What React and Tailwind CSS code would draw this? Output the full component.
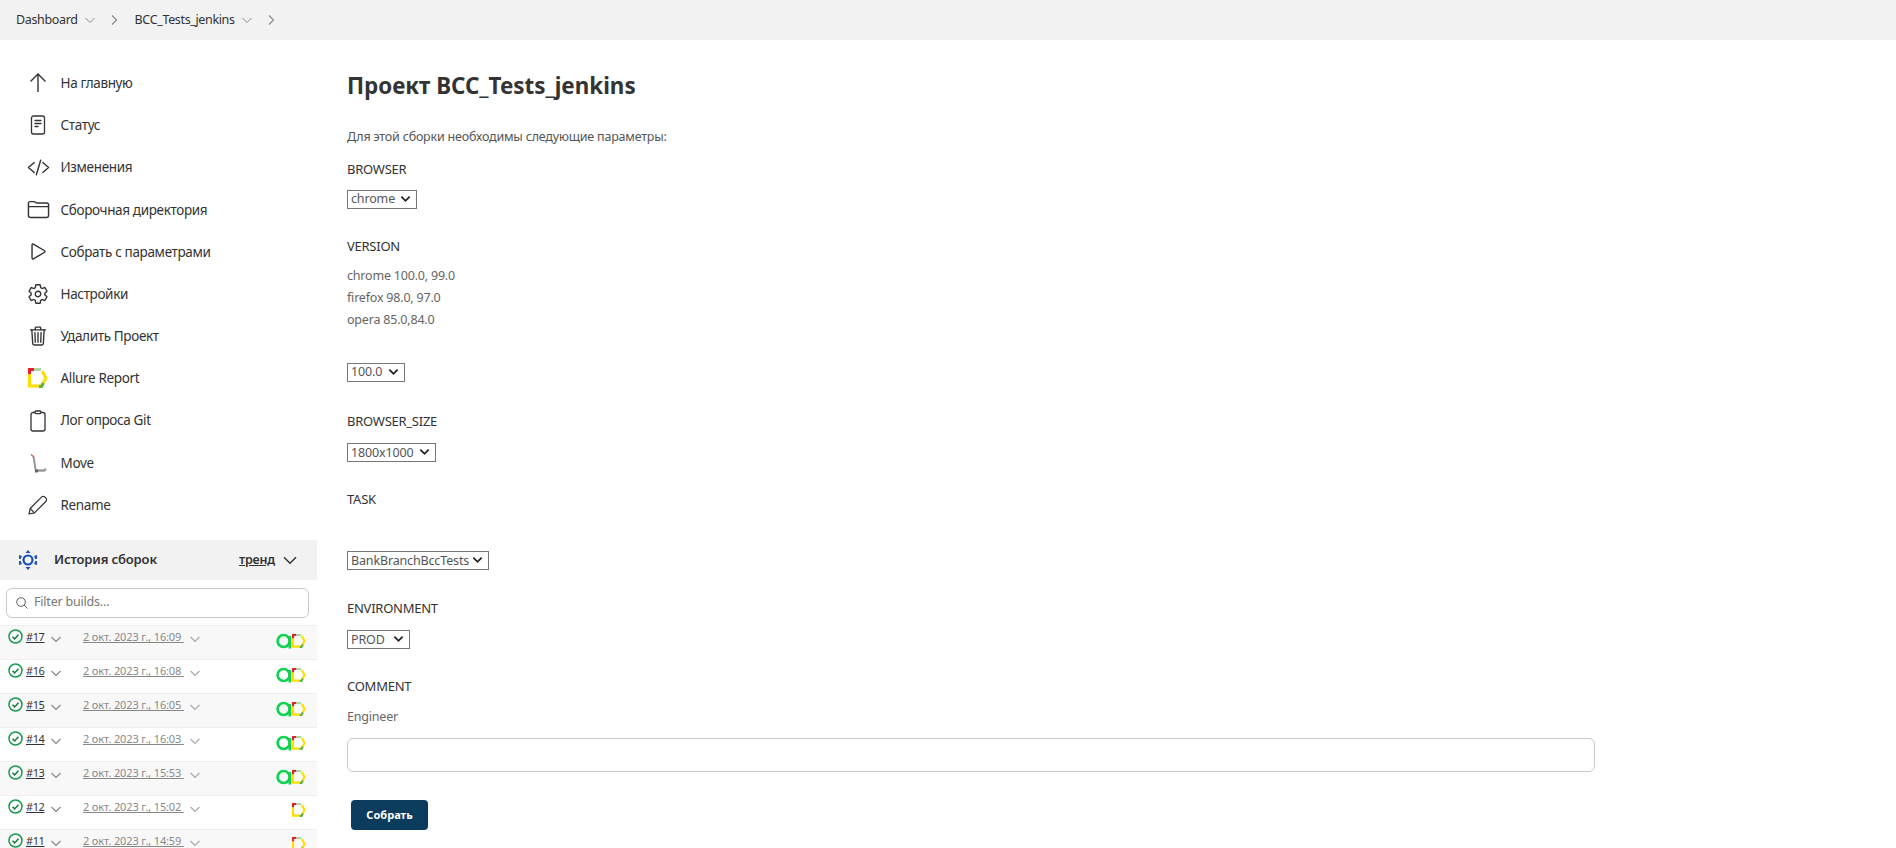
import React from "react";
import {
  IoCodeSlashOutline, IoFolderOutline, IoPlayOutline, IoSettingsOutline,
  IoTrashOutline, IoSearchOutline,
} from "react-icons/io5";

const Chev = ({ s = 12, c = "#888", w = 1.2, cls = "" }) => (
  <svg width={s} height={s} viewBox="0 0 12 12" fill="none" stroke={c} strokeWidth={w} className={cls}>
    <path d="M1.500 4l4.500 4.500L10.500 4" />
  </svg>
);
const ChevR = ({ cls = "" }) => (
  <svg width="12" height="12" viewBox="0 0 12 12" fill="none" stroke="#888" strokeWidth="1.100" className={cls}>
    <path d="M4 1.500L8.500 6 4 10.500" />
  </svg>
);
const ArrowUp = () => (
  <svg width="24" height="24" viewBox="0 0 24 24" fill="none" stroke="#333" strokeWidth="1.400">
    <path d="M12 21V3.500M4.500 10.500L12 3l7.500 7.500" />
  </svg>
);
const Status = () => (
  <svg width="22" height="22" viewBox="0 0 22 22" fill="none" stroke="#333" strokeWidth="1.300" strokeLinecap="round">
    <rect x="4.500" y="2" width="13" height="18" rx="2" />
    <path d="M8 6.500h6M8 9.500h6M8 12.500h3" />
  </svg>
);
const Clip = () => (
  <svg width="22" height="22" viewBox="0 0 22 22" fill="none" stroke="#333" strokeWidth="1.300">
    <rect x="4" y="2.500" width="14" height="18.500" rx="2" />
    <rect x="8" y="1" width="6" height="2.600" rx="1" fill="#fff" />
  </svg>
);
const Pencil = () => (
  <svg width="20" height="20" viewBox="0 0 20 20" fill="none" stroke="#333" strokeWidth="1.200" strokeLinejoin="round">
    <path d="M1 19l1.200 -5.500L13.500 2.200c1 -1 2.500 -1 3.500 0l.8 .8c1 1 1 2.500 0 3.500L6.500 17.800z" />
    <path d="M2.200 13.500l4.300 4.300" />
  </svg>
);
const StatusOk = () => (
  <svg width="15" height="15" viewBox="0 0 15 15" fill="none" stroke="#1a9a50" strokeWidth="1.500" className="ml-[7.500px]">
    <circle cx="7.500" cy="7.500" r="6.500" />
    <path d="M4.500 7.800l2.100 2.100 3.900 -4.200" stroke="#1a7a40" />
  </svg>
);
const Allure = ({ s = 20 }) => (
  <svg width={s} height={s} viewBox="0 0 20 20" fill="none" strokeWidth="3">
    <path d="M1.500 6V18H12" stroke="#ffdd00" />
    <path d="M12 18.500H13L18 10L14 3" stroke="#ffdd00" />
    <path d="M6 1.500H13" stroke="#a8d8a8" />
    <path d="M1.500 6V1.500H6" stroke="#e8202a" />
    <path d="M11 18.500H13.500L15.500 15" stroke="#5bb544" />
  </svg>
);
const Qa = () => (
  <svg width="16" height="16" viewBox="0 0 16 16" fill="none" stroke="#0dd34f" strokeWidth="2.600">
    <circle cx="7.600" cy="8" r="6" />
    <path d="M13.800 3v12.500" />
  </svg>
);
const Move = () => (
  <svg width="20" height="22" viewBox="0 0 20 22" fill="none">
    <path d="M3 2.500l3 2.500" stroke="#d43" strokeWidth="1.100" />
    <path d="M5.500 4.500l2 13" stroke="#999" strokeWidth="2" />
    <path d="M7 18.500h9l2 -1.500" stroke="#9a9a9a" strokeWidth="2.600" />
    <circle cx="8.500" cy="19" r="1.800" fill="#666" />
  </svg>
);
const HistoryIcon = () => (
  <svg width="20" height="20" viewBox="0 0 20 20" fill="#1751b5">
    <circle cx="10" cy="10" r="4.500" fill="none" stroke="#1751b5" strokeWidth="2.200" />
    <path d="M10 0l2.500 3h-5zM10 20l-2.500 -3h5z" />
    <path d="M1 5l3 1 -1.500 3 -1.500 0zM19 5l-3 1 1.500 3 1.500 0zM1 15l3 -1 -1.500 -3 -1.500 0zM19 15l-3 -1 1.500 -3 1.500 0z" />
  </svg>
);

const nav = [
  ["На главную", <ArrowUp />],
  ["Статус", <Status />],
  ["Изменения", <IoCodeSlashOutline size={23} color="#333" />],
  ["Сборочная директория", <IoFolderOutline size={23} color="#333" />],
  ["Собрать с параметрами", <IoPlayOutline size={23} color="#333" />],
  ["Настройки", <IoSettingsOutline size={22} color="#333" />],
  ["Удалить Проект", <IoTrashOutline size={22} color="#333" />],
  ["Allure Report", <Allure />],
  ["Лог опроса Git", <Clip />],
  ["Move", <Move />],
  ["Rename", <Pencil />],
];

const builds = [
  ["#17", "2 окт. 2023 г., 16:09", true],
  ["#16", "2 окт. 2023 г., 16:08", true],
  ["#15", "2 окт. 2023 г., 16:05", true],
  ["#14", "2 окт. 2023 г., 16:03", true],
  ["#13", "2 окт. 2023 г., 15:53", true],
  ["#12", "2 окт. 2023 г., 15:02", false],
  ["#11", "2 окт. 2023 г., 14:59", false],
];

const Crumb = ({ label }) => (
  <>
    <span>{label}</span>
    <Chev cls="ml-[6px]" w={1} />
    <ChevR cls="ml-[12px]" />
  </>
);

const Sel = ({ options, w }) => (
  <div className="relative" style={{ width: w }}>
    <select className="block appearance-none w-full h-[19px] border border-[#767676] text-[12.500px] text-[#555] leading-none tracking-[-0.15px] pl-[3px] pr-0 pt-[1px]">
      {options.map((o) => (
        <option key={o}>{o}</option>
      ))}
    </select>
    <Chev s={11} c="#222" w={2} cls="absolute right-[6px] top-[3px] pointer-events-none" />
  </div>
);

const Label = ({ children, cls = "" }) => (
  <div className={"text-[13px] leading-[18px] text-[#333] tracking-[-0.25px] " + cls}>{children}</div>
);

export default function App() {
  return (
    <div className="h-[848px] w-[1896px] overflow-hidden bg-white" style={{ fontFamily: '"Noto Sans", sans-serif' }}>
      <div className="h-10 bg-[#f2f2f2] flex items-center pl-4 text-[12.500px] tracking-[-0.35px] text-[#333]">
        <Crumb label="Dashboard" />
        <span className="w-[15px]" />
        <Crumb label="BCC_Tests_jenkins" />
      </div>
      <div className="flex">
        <aside className="w-[317px] shrink-0">
          <nav className="pt-[22px]">
            {nav.map(([label, icon]) => (
              <div key={label} className="h-[42.200px] flex items-center text-[#333] text-[13.500px] tracking-[-0.35px]">
                <span className="w-[24px] ml-[26px] flex justify-center">{icon}</span>
                <span className="ml-[10.500px]">{label}</span>
              </div>
            ))}
          </nav>
          <div className="mt-[14px] h-10 bg-[#f2f2f2] flex items-center text-[13px] font-semibold text-[#333] tracking-[-0.15px]">
            <span className="ml-[18px]"><HistoryIcon /></span>
            <span className="ml-[16px]">История сборок</span>
            <span className="ml-auto underline text-[12.500px] tracking-[-0.2px]">тренд</span>
            <Chev s={16} c="#333" w={1.100} cls="ml-[7px] mr-[19px]" />
          </div>
          <div className="ml-[6px] mr-[8px] mt-[7.500px] h-[30px] border border-[#c3ccd1] rounded-md flex items-center pl-2 text-[12.500px] tracking-[-0.2px] text-[#777]">
            <IoSearchOutline size={14} color="#444" />
            <span className="ml-[5px]">Filter builds...</span>
          </div>
          <div className="mt-[7.500px]">
            {builds.map(([n, d, qa], i) => (
              <div key={n} className={"h-[34px] border-t border-[#eee] relative flex items-start pt-[3px] text-[11px] " + (i % 2 === 0 ? "bg-[#f8f8f8]" : "bg-white")}>
                <StatusOk />
                <span className="absolute left-[26px] top-[3px] text-[#333] underline tracking-[-0.4px]">{n}</span>
                <Chev cls="absolute left-[50px] top-[7px]" />
                <span className="absolute left-[83px] top-[3px] text-[#888] underline tracking-[-0.15px]">{d}&nbsp;</span>
                <Chev c="#aaa" cls="absolute left-[189px] top-[7px]" />
                <div className="absolute right-[11px] top-[7px] flex items-center">
                  {qa && <Qa />}
                  <Allure s={14} />
                </div>
              </div>
            ))}
          </div>
        </aside>
        <main className="pl-[30px] flex-1">
          <h1 className="mt-[30.500px] text-[22.400px] font-bold leading-[30px] text-[#333]">Проект BCC_Tests_jenkins</h1>
          <p className="mt-[27px] text-[12.500px] leading-[18px] text-[#555] tracking-[-0.2px]">Для этой сборки необходимы следующие параметры:</p>
          <Label cls="mt-[14px]">BROWSER</Label>
          <div className="mt-[12px]"><Sel options={["chrome"]} w="70px" /></div>
          <Label cls="mt-[28.500px]">VERSION</Label>
          <div className="mt-[9.500px] text-[12.500px] leading-[22px] text-[#666] tracking-[-0.2px]">
            <div>chrome 100.0, 99.0</div>
            <div>firefox 98.0, 97.0</div>
            <div>opera 85.0,84.0</div>
          </div>
          <div className="mt-[32px]"><Sel options={["100.0"]} w="58px" /></div>
          <Label cls="mt-[30.500px]">BROWSER_SIZE</Label>
          <div className="mt-[13px]"><Sel options={["1800x1000"]} w="89px" /></div>
          <Label cls="mt-[28px]">TASK</Label>
          <div className="mt-[43px]"><Sel options={["BankBranchBccTests"]} w="142px" /></div>
          <Label cls="mt-[29px]">ENVIRONMENT</Label>
          <div className="mt-[13px]"><Sel options={["PROD"]} w="63px" /></div>
          <Label cls="mt-[28px]">COMMENT</Label>
          <div className="mt-[12.500px] text-[12.500px] leading-[18px] text-[#666] tracking-[-0.2px]">Engineer</div>
          <input className="mt-[12.500px] block w-[1248px] h-[34px] border border-[#c3ccd1] rounded-md" />
          <button className="mt-[28px] ml-[4px] w-[77px] h-[30px] rounded bg-[#0b3c5d] text-white text-[11px] font-bold">Собрать</button>
        </main>
      </div>
    </div>
  );
}
